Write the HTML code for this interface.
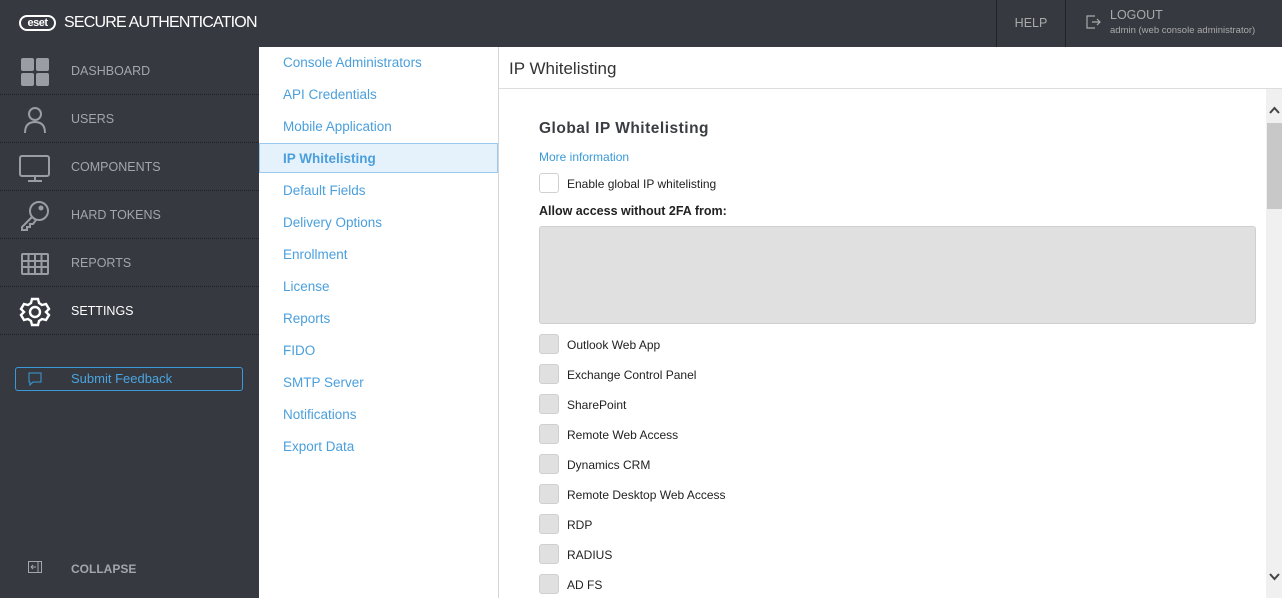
<!DOCTYPE html>
<html><head><meta charset="utf-8"><style>
*{box-sizing:border-box;margin:0;padding:0}
body{width:1282px;height:598px;overflow:hidden;background:#fff;font-family:"Liberation Sans",sans-serif;position:relative}
.top{position:absolute;left:0;top:0;width:1282px;height:47px;background:#363940}
.logo{position:absolute;left:19px;top:15px;width:37px;height:16px;border:2px solid #fff;border-radius:8px;color:#fff;font-size:11px;font-weight:bold;line-height:12px;text-align:center;letter-spacing:-0.5px}
.brand{position:absolute;left:64px;top:14px;color:#fff;font-size:16px;letter-spacing:-0.8px}
.help{position:absolute;left:996px;top:0;width:70px;height:47px;border-left:1px solid #222;border-right:1px solid #222;color:#aaa;font-size:12.5px;text-align:center;line-height:47px}
.lo{position:absolute;left:1110px;top:8px;color:#aaa;font-size:12.5px}
.lo small{display:block;font-size:9.5px;margin-top:3px}
.side{position:absolute;left:0;top:47px;width:259px;height:551px;background:#363940}
.it{position:absolute;left:0;width:259px;height:48px;border-bottom:1px dotted #1e2024;color:#a3a6ab;font-size:12.5px;line-height:49px;padding-left:71px}
.it svg{position:absolute;left:19px;top:9px}
.fb{position:absolute;left:15px;top:320px;width:228px;height:24px;border:1px solid #3a9ad9;border-radius:3px;color:#4aa5e0;font-size:13px;line-height:22px;padding-left:55px}
.col{position:absolute;left:71px;top:515px;color:#a3a6ab;font-size:12px;font-weight:bold}
.nav{position:absolute;left:259px;top:47px;width:240px;height:551px;border-right:1px solid #d6d6d6}
.nav div{position:absolute;left:0;width:239px;height:30px;line-height:32px;padding-left:24px;color:#4a9fdc;font-size:13.5px}
.nav .act{background:#e5f1fb;border:1px solid #99c9ef;font-weight:bold;padding-left:23px;line-height:29px}
.hdr{position:absolute;left:499px;top:47px;width:783px;height:42px;border-bottom:1px solid #ddd;font-size:17px;color:#333;padding:12px 0 0 10px}
.c{position:absolute;left:539px;color:#222;font-size:12px}
.cb{position:absolute;left:539px;width:20px;height:20px;border-radius:3px;background:#e0e0e0;border:1px solid #d0d0d0}
.cl{position:absolute;left:567px;font-size:12px;color:#222}
.sb{position:absolute;left:1266px;top:89px;width:16px;height:509px;background:#f0f0f0}
</style></head><body>
<div class="top">
<div class="logo">eset</div>
<div class="brand">SECURE AUTHENTICATION</div>
<div class="help">HELP</div>
<svg style="position:absolute;left:1085px;top:14px" width="16" height="16" viewBox="0 0 16 16" fill="none" stroke="#aaa" stroke-width="1.2"><path d="M10 2H2v12h8M7 8h8M12 5l3 3-3 3"/></svg>
<div class="lo">LOGOUT<small>admin (web console administrator)</small></div>
</div>
<div class="side">
<div class="it" style="top:0"><svg width="32" height="32" viewBox="0 0 32 32" fill="#9a9da3"><rect x="2" y="2" width="13" height="13" rx="2"/><rect x="17" y="2" width="13" height="13" rx="2"/><rect x="2" y="17" width="13" height="13" rx="2"/><rect x="17" y="17" width="13" height="13" rx="2"/></svg>DASHBOARD</div>
<div class="it" style="top:48px"><svg width="32" height="32" viewBox="0 0 32 32" fill="none" stroke="#9a9da3" stroke-width="2"><circle cx="16" cy="10" r="6"/><path d="M6 29c0-8 4-11 10-11s10 3 10 11"/></svg>USERS</div>
<div class="it" style="top:96px"><svg width="32" height="32" viewBox="0 0 32 32" fill="none" stroke="#9a9da3" stroke-width="2"><rect x="1" y="4" width="29" height="20" rx="2"/><path d="M16 24v5M9 29h14"/></svg>COMPONENTS</div>
<div class="it" style="top:144px"><svg width="32" height="32" viewBox="0 0 32 32" fill="none" stroke="#9a9da3" stroke-width="2"><circle cx="20" cy="11" r="9"/><circle cx="22" cy="8" r="1.5" fill="#9a9da3"/><path d="M13 17L3 27v3h5v-3h3v-3h3l3-4"/></svg>HARD TOKENS</div>
<div class="it" style="top:192px"><svg width="32" height="32" viewBox="0 0 32 32" fill="none" stroke="#9a9da3" stroke-width="2"><rect x="3" y="6" width="26" height="20" rx="1"/><path d="M3 13h26M3 19h26M9.5 6v20M16 6v20M22.5 6v20"/></svg>REPORTS</div>
<div class="it" style="top:240px;color:#fff"><svg width="32" height="32" viewBox="0 0 32 32" fill="none" stroke="#fff" stroke-width="2.4"><circle cx="16" cy="16" r="5"/><path d="M13 3h6l1 4 3 2 4-1 3 5-3 3v0l3 3-3 5-4-1-3 2-1 4h-6l-1-4-3-2-4 1-3-5 3-3-3-3 3-5 4 1 3-2z"/></svg>SETTINGS</div>
<div class="fb"><svg style="position:absolute;left:12px;top:4px" width="14" height="14" viewBox="0 0 14 14" fill="none" stroke="#3a9ad9"><path d="M1 1h12v9H5l-3 3v-3H1z"/></svg>Submit Feedback</div>
<svg style="position:absolute;left:28px;top:514px" width="14" height="12" viewBox="0 0 14 12" fill="none" stroke="#a3a6ab"><rect x="0.5" y="0.5" width="13" height="11"/><path d="M10 1v10M3 6h5M3 6l2-2M3 6l2 2"/></svg>
<div class="col">COLLAPSE</div>
</div>
<div class="nav">
<div style="top:0">Console Administrators</div>
<div style="top:32px">API Credentials</div>
<div style="top:64px">Mobile Application</div>
<div class="act" style="top:96px">IP Whitelisting</div>
<div style="top:128px">Default Fields</div>
<div style="top:160px">Delivery Options</div>
<div style="top:192px">Enrollment</div>
<div style="top:224px">License</div>
<div style="top:256px">Reports</div>
<div style="top:288px">FIDO</div>
<div style="top:320px">SMTP Server</div>
<div style="top:352px">Notifications</div>
<div style="top:384px">Export Data</div>
</div>
<div class="hdr">IP Whitelisting</div>
<div class="c" style="top:120px;font-size:15.5px;font-weight:bold;color:#3a3d42;letter-spacing:0.5px">Global IP Whitelisting</div>
<div class="c" style="top:150px;color:#3a9ad9;font-size:12px">More information</div>
<div class="cb" style="top:173px;background:#fff"></div><div class="cl" style="top:177px">Enable global IP whitelisting</div>
<div class="c" style="top:204px;font-weight:bold;font-size:12.5px">Allow access without 2FA from:</div>
<div style="position:absolute;left:539px;top:226px;width:717px;height:98px;background:#e0e0e0;border:1px solid #cfcfcf;border-radius:3px"></div>
<div class="cb" style="top:334px"></div><div class="cl" style="top:338px">Outlook Web App</div>
<div class="cb" style="top:364px"></div><div class="cl" style="top:368px">Exchange Control Panel</div>
<div class="cb" style="top:394px"></div><div class="cl" style="top:398px">SharePoint</div>
<div class="cb" style="top:424px"></div><div class="cl" style="top:428px">Remote Web Access</div>
<div class="cb" style="top:454px"></div><div class="cl" style="top:458px">Dynamics CRM</div>
<div class="cb" style="top:484px"></div><div class="cl" style="top:488px">Remote Desktop Web Access</div>
<div class="cb" style="top:514px"></div><div class="cl" style="top:518px">RDP</div>
<div class="cb" style="top:544px"></div><div class="cl" style="top:548px">RADIUS</div>
<div class="cb" style="top:574px"></div><div class="cl" style="top:578px">AD FS</div>
<div class="sb"><svg style="position:absolute;left:3px;top:17px" width="11" height="8" viewBox="0 0 11 8" fill="none" stroke="#444" stroke-width="2"><path d="M1 7l4.5-5 4.5 5"/></svg>
<div style="position:absolute;left:1px;top:34px;width:15px;height:86px;background:#c8c8c8"></div>
<svg style="position:absolute;left:3px;top:484px" width="11" height="8" viewBox="0 0 11 8" fill="none" stroke="#444" stroke-width="2"><path d="M1 1l4.5 5 4.5-5"/></svg></div>
</body></html>
